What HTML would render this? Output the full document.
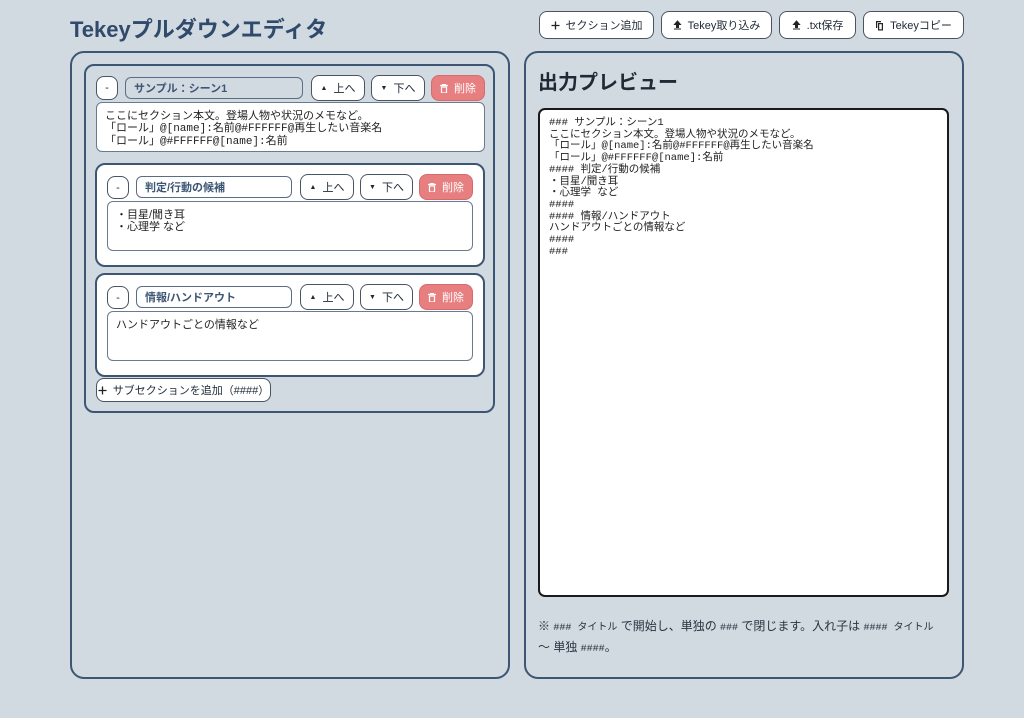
<!DOCTYPE html>
<html><head><meta charset="utf-8"><style>
body{margin:0;width:1024px;height:718px;background:#d1d9e1;font-family:"Liberation Sans","Noto Sans CJK JP",sans-serif;position:relative;overflow:hidden;color:#1f2a36}
.a{position:absolute;box-sizing:border-box}
.btn{position:absolute;box-sizing:border-box;background:#fff;border:1px solid #4a5563;border-radius:8px;font-size:11px;display:flex;align-items:center;justify-content:center;color:#1f2a36;white-space:nowrap;gap:6px}
.del{background:#e77f80;border-color:#d46a6b;color:#fff}
.inp{position:absolute;box-sizing:border-box;border:1px solid #5b6d82;border-radius:6px;font-size:11px;font-weight:bold;color:#3d5674;padding-left:8px;display:flex;align-items:center;background:#fff}
.ta{position:absolute;box-sizing:border-box;background:#fff;border:1px solid #6b7a8c;border-radius:6px;font-size:11px;line-height:12px;padding:7px 8px;white-space:pre;color:#222}
.panel{position:absolute;box-sizing:border-box;border:2px solid #3d5674;border-radius:14px}
.card{position:absolute;box-sizing:border-box;border:2px solid #3d5674;border-radius:10px;background:#fff}
.mono{font-family:"Liberation Mono","DejaVu Sans Mono","Noto Sans CJK JP",monospace}
svg{display:block}
</style></head><body>
<div class="a" style="left:70px;top:12px;font-size:22px;font-weight:bold;color:#2f4a6a">Tekeyプルダウンエディタ</div>
<div class="btn" style="left:539px;top:11px;width:115px;height:28px"><svg width="9" height="9" viewBox="0 0 9 9"><path d="M4.5 0.5v8M0.5 4.5h8" stroke="#222" stroke-width="1.3"/></svg>セクション追加</div>
<div class="btn" style="left:661px;top:11px;width:111px;height:28px"><svg width="9" height="10" viewBox="0 0 9 10"><path d="M4.5 1L1.5 4.5h2v3h2v-3h2z M1 9h7" fill="#222" stroke="#222" stroke-width="1"/></svg>Tekey取り込み</div>
<div class="btn" style="left:779px;top:11px;width:77px;height:28px"><svg width="9" height="10" viewBox="0 0 9 10"><path d="M4.5 1L1.5 4.5h2v3h2v-3h2z M1 9h7" fill="#222" stroke="#222" stroke-width="1"/></svg>.txt保存</div>
<div class="btn" style="left:863px;top:11px;width:101px;height:28px"><svg width="9" height="11" viewBox="0 0 9 11"><path d="M1 1h5v1.2H2.2V8H1z M3 3h5v7.5H3z" fill="#222"/><path d="M4.2 4.2h2.6v5.1H4.2z" fill="#fff"/></svg>Tekeyコピー</div>

<div class="panel" style="left:70px;top:51px;width:440px;height:628px"></div>
<div class="panel" style="left:524px;top:51px;width:440px;height:628px"></div>

<div class="card" style="left:84px;top:64px;width:411px;height:349px;background:#d1d9e1"></div>
<div class="btn" style="left:96px;top:76px;width:22px;height:24px">-</div>
<div class="inp" style="left:125px;top:77px;width:178px;height:22px;background:#d1d9e1">サンプル：シーン1</div>
<div class="btn" style="left:311px;top:75px;width:54px;height:26px"><span style="font-size:7px">▲</span>上へ</div>
<div class="btn" style="left:371px;top:75px;width:54px;height:26px"><span style="font-size:7px">▼</span>下へ</div>
<div class="btn del" style="left:431px;top:75px;width:54px;height:26px"><svg width="8" height="9" viewBox="0 0 8 9"><path d="M0 1.5h8M2.5 1.5V0.5h3v1M1.5 3h5v6h-5z" stroke="#fff" fill="none" stroke-width="1.2"/></svg>削除</div>
<div class="ta" style="left:96px;top:102px;width:389px;height:50px">ここにセクション本文。登場人物や状況のメモなど。
「ロール」<span class="mono">@[name]:</span>名前<span class="mono">@#FFFFFF@</span>再生したい音楽名
「ロール」<span class="mono">@#FFFFFF@[name]:</span>名前</div>

<div class="card" style="left:95px;top:163px;width:390px;height:104px"></div>
<div class="btn" style="left:107px;top:176px;width:22px;height:23px">-</div>
<div class="inp" style="left:136px;top:176px;width:156px;height:22px">判定/行動の候補</div>
<div class="btn" style="left:300px;top:174px;width:54px;height:26px"><span style="font-size:7px">▲</span>上へ</div>
<div class="btn" style="left:360px;top:174px;width:53px;height:26px"><span style="font-size:7px">▼</span>下へ</div>
<div class="btn del" style="left:419px;top:174px;width:54px;height:26px"><svg width="8" height="9" viewBox="0 0 8 9"><path d="M0 1.5h8M2.5 1.5V0.5h3v1M1.5 3h5v6h-5z" stroke="#fff" fill="none" stroke-width="1.2"/></svg>削除</div>
<div class="ta" style="left:107px;top:201px;width:366px;height:50px">・目星/聞き耳
・心理学 など</div>

<div class="card" style="left:95px;top:273px;width:390px;height:104px"></div>
<div class="btn" style="left:107px;top:286px;width:22px;height:23px">-</div>
<div class="inp" style="left:136px;top:286px;width:156px;height:22px">情報/ハンドアウト</div>
<div class="btn" style="left:300px;top:284px;width:54px;height:26px"><span style="font-size:7px">▲</span>上へ</div>
<div class="btn" style="left:360px;top:284px;width:53px;height:26px"><span style="font-size:7px">▼</span>下へ</div>
<div class="btn del" style="left:419px;top:284px;width:54px;height:26px"><svg width="8" height="9" viewBox="0 0 8 9"><path d="M0 1.5h8M2.5 1.5V0.5h3v1M1.5 3h5v6h-5z" stroke="#fff" fill="none" stroke-width="1.2"/></svg>削除</div>
<div class="ta" style="left:107px;top:311px;width:366px;height:50px">ハンドアウトごとの情報など</div>

<div class="btn" style="left:96px;top:378px;width:175px;height:24px"><svg width="9" height="9" viewBox="0 0 9 9"><path d="M4.5 0.5v8M0.5 4.5h8" stroke="#222" stroke-width="1.3"/></svg>サブセクションを追加（####）</div>

<div class="a" style="left:538px;top:66px;font-size:20px;font-weight:bold;color:#1f2a36">出力プレビュー</div>
<div class="a mono" style="left:538px;top:108px;width:411px;height:489px;background:#fff;border:2px solid #1a1a1a;border-radius:7px;padding:8px 9px;font-size:10.5px;line-height:11.7px;white-space:pre;color:#222">### サンプル：シーン1
ここにセクション本文。登場人物や状況のメモなど。
「ロール」@[name]:名前@#FFFFFF@再生したい音楽名
「ロール」@#FFFFFF@[name]:名前
#### 判定/行動の候補
・目星/聞き耳
・心理学 など
####
#### 情報/ハンドアウト
ハンドアウトごとの情報など
####
###</div>
<div class="a" style="left:538px;top:617px;width:410px;font-size:12px;line-height:18px;color:#2a3440">※ <span class="mono" style="font-size:10px">### タイトル</span> で開始し、単独の <span class="mono" style="font-size:10px">###</span> で閉じます。入れ子は <span class="mono" style="font-size:10px">#### タイトル</span><br>〜 単独 <span class="mono" style="font-size:10px">####</span>。</div>
</body></html>
